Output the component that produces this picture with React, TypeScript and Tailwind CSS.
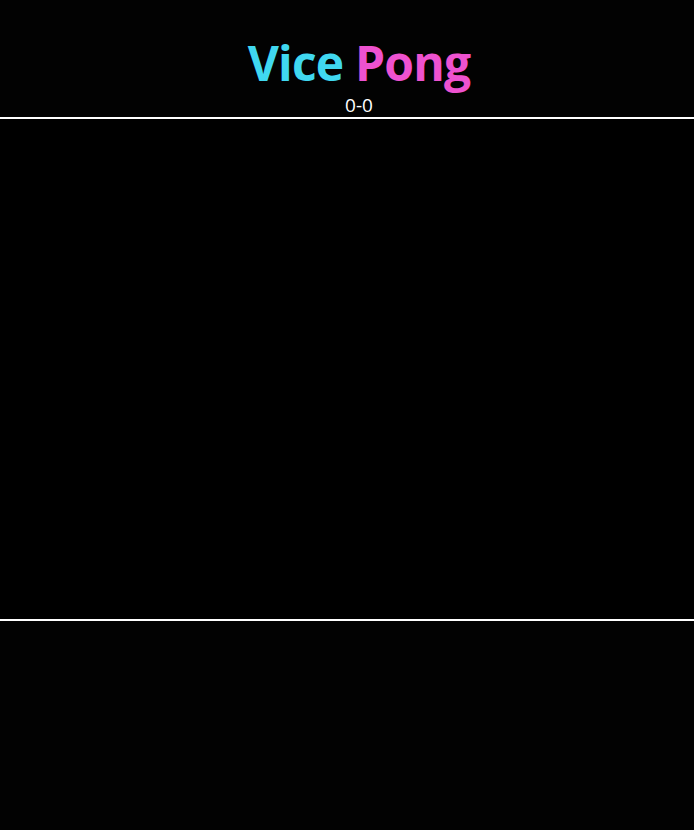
export default function App() {
  return (
    <div className="min-h-[830px] bg-[#020202] text-white" style={{ fontFamily: '"Open Sans", "Noto Sans", sans-serif' }}>
      <header className="flex flex-col items-center pl-[24px] pt-[33px]">
        <h1 className="text-[48px] font-bold leading-[60px] tracking-[-0.8px]">
          <span className="text-[#40d8f0]">Vice</span>{' '}
          <span className="text-[#ee52d0]">Pong</span>
        </h1>
        <div className="text-[19px] leading-[24px]">0-0</div>
      </header>
      <div className="h-[504px] border-y-2 border-white bg-black"></div>
    </div>
  );
}
